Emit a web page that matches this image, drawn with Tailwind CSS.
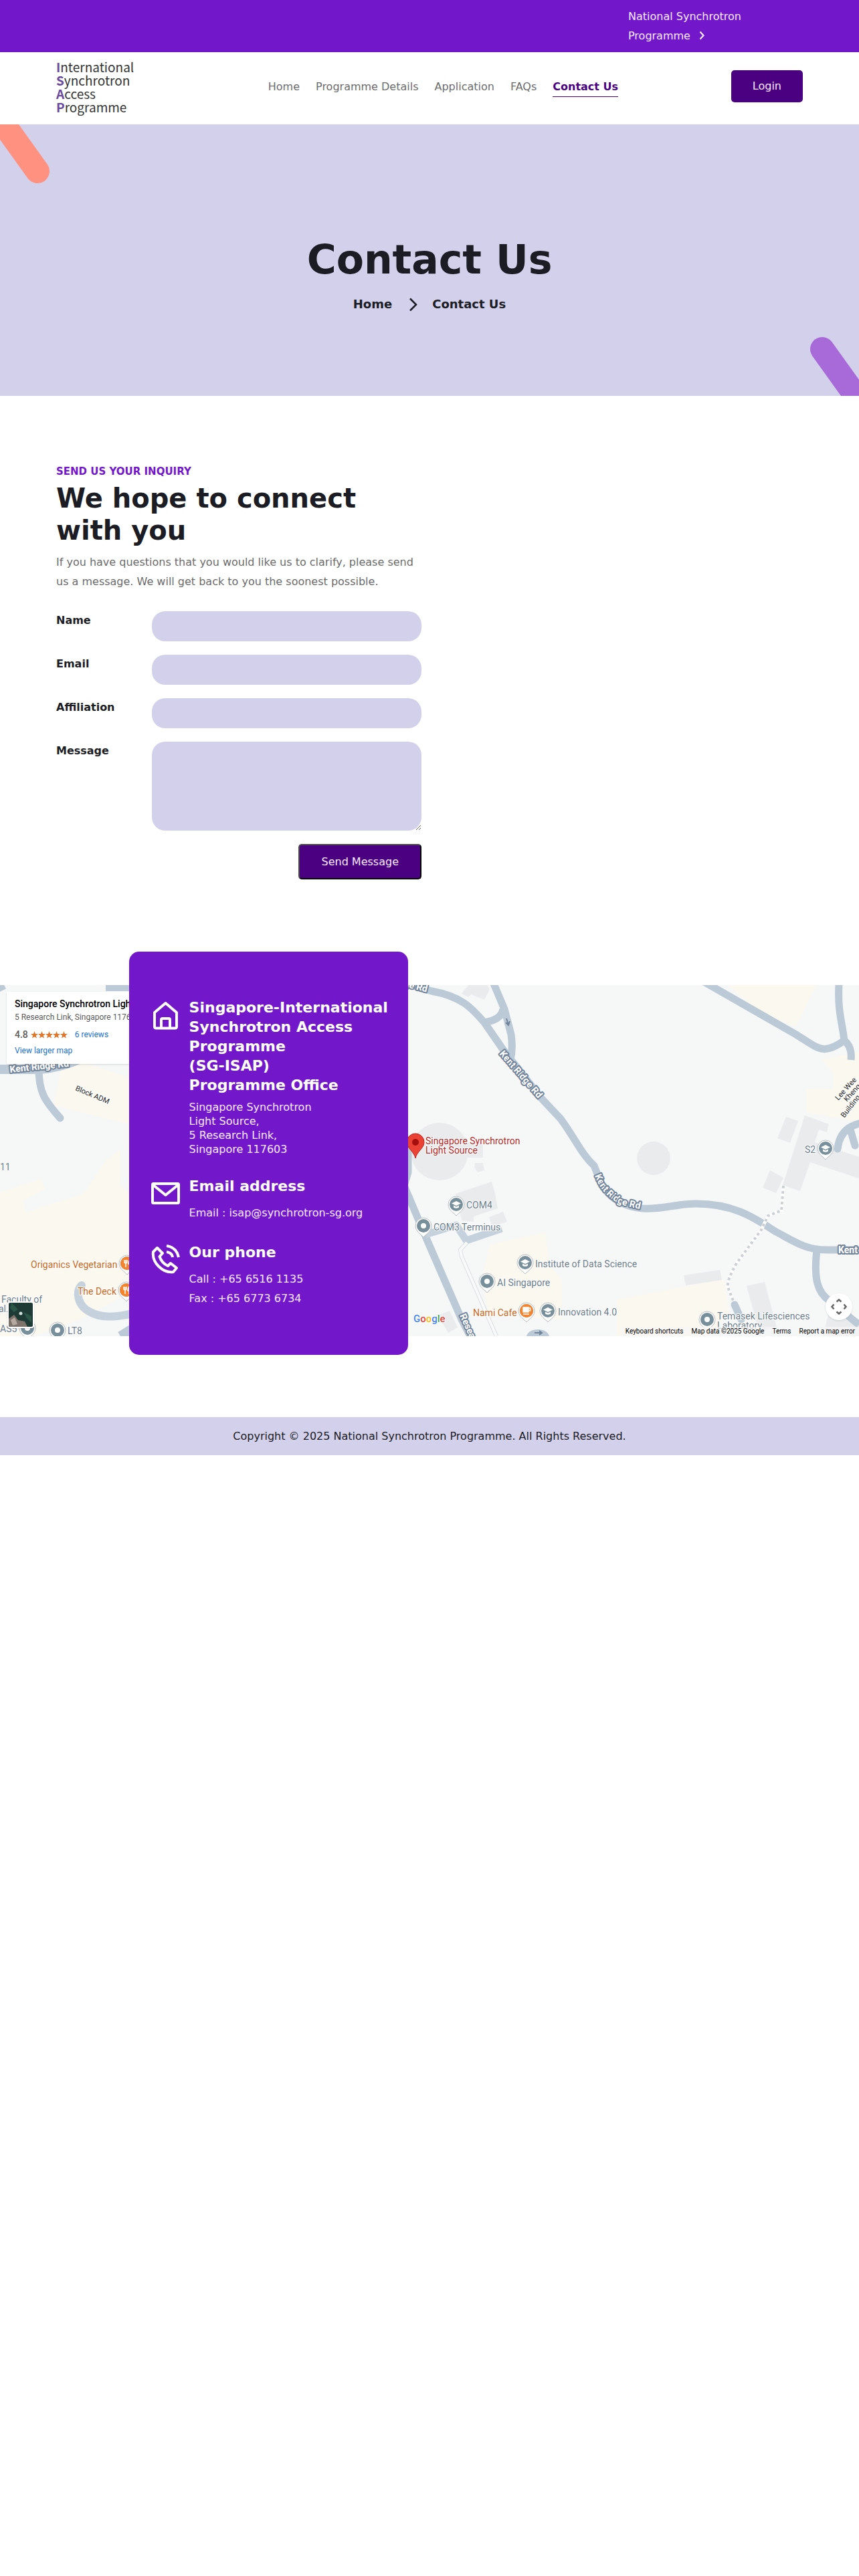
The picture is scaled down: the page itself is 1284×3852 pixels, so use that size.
<!DOCTYPE html>
<html lang="en">
<head>
<meta charset="utf-8">
<meta name="viewport" content="width=device-width, initial-scale=1">
<title>Contact Us - International Synchrotron Access Programme</title>
<script src="https://cdn.jsdelivr.net/npm/@tailwindcss/browser@4"></script>
</head>
<body class="bg-white font-['DejaVu_Sans',sans-serif] text-base leading-[29px] text-[#1b1c24]">

<!-- Top bar -->
<div class="bg-[#7317cb] py-2.5 text-[#f6e9ff]">
  <div class="mx-auto flex max-w-[1140px] justify-end px-3">
    <a href="#" class="w-[261px]">National Synchrotron<br>Programme
      <svg class="ml-1 inline-block size-4 align-[-2px]" viewBox="0 0 16 16" fill="none" stroke="currentColor" stroke-width="2.2"><path d="M5.500 2.500L10.500 8L5.500 13.500"/></svg></a>
  </div>
</div>

<!-- Header -->
<header class="bg-white">
  <div class="mx-auto grid h-[108px] max-w-[1140px] grid-cols-[auto_1fr_auto] items-center px-3">
    <a href="#" class="w-[116px] pb-1 font-['Noto_Sans_CJK_SC',sans-serif] text-[19px] leading-5 text-[#333]">
      <span class="block"><b class="text-[#6a4a9c]">I</b>nternational</span>
      <span class="block"><b class="text-[#6a4a9c]">S</b>ynchrotron</span>
      <span class="block"><b class="text-[#6a4a9c]">A</b>ccess</span>
      <span class="block"><b class="text-[#6a4a9c]">P</b>rogramme</span>
    </a>
    <nav class="mb-1 flex justify-center gap-6 pl-8 leading-7 text-[#6c6c6c]">
      <a href="#" class="border-b border-transparent">Home</a>
      <a href="#" class="border-b border-transparent">Programme Details</a>
      <a href="#" class="border-b border-transparent">Application</a>
      <a href="#" class="border-b border-transparent">FAQs</a>
      <a href="#" class="border-b border-[#4b0082] font-bold text-[#4b0082]">Contact Us</a>
    </nav>
    <button type="button" class="mb-1.5 h-12 rounded-[5px] bg-[#4b0082] px-8 leading-6 text-[#f6e9ff]">Login</button>
  </div>
</header>

<!-- Page banner -->
<section class="relative flex h-[406px] flex-col items-center overflow-hidden bg-[#d3d0eb] pt-[166px]">
  <svg class="absolute left-0 top-0" width="80" height="90" viewBox="0 0 80 90"><path d="M-30 -50L56 70" stroke="#ff9180" stroke-width="36" stroke-linecap="round"/></svg>
  <svg class="absolute bottom-0 right-0" width="80" height="90" viewBox="0 0 80 90"><path d="M25 20L111 140" stroke="#a86ad8" stroke-width="36" stroke-linecap="round"/></svg>
  <h1 class="text-[60px] font-bold leading-[72px]">Contact Us</h1>
  <div class="mt-4 flex items-center text-lg font-bold leading-[29px]">
    <a href="#">Home</a>
    <svg class="ml-6 mr-5 h-5 w-4" viewBox="0 0 16 20" fill="none" stroke="currentColor" stroke-width="2.500"><path d="M3 1.500L12 10.500L3 19.500"/></svg>
    <span>Contact Us</span>
  </div>
</section>

<!-- Inquiry form -->
<section class="mx-auto max-w-[1140px] px-3 pb-[108px] pt-[100px]">
  <div class="w-full max-w-[546px]">
    <p class="mb-0.5 text-[15px] font-bold uppercase leading-[27px] text-[#7317cb]">Send us your inquiry</p>
    <h2 class="mb-[9px] text-[40px] font-bold leading-[48px]">We hope to connect with you</h2>
    <p class="text-[#6c6c6c]">If you have questions that you would like us to clarify, please send us a message. We will get back to you the soonest possible.</p>
    <form class="mt-[30px] grid grid-cols-[143px_1fr] gap-y-5">
      <label for="name" class="font-bold leading-7">Name</label>
      <input id="name" type="text" class="h-[45px] rounded-[20px] bg-[#d3d0eb] px-5">
      <label for="email" class="font-bold leading-7">Email</label>
      <input id="email" type="email" class="h-[45px] rounded-[20px] bg-[#d3d0eb] px-5">
      <label for="affiliation" class="font-bold leading-7">Affiliation</label>
      <input id="affiliation" type="text" class="h-[45px] rounded-[20px] bg-[#d3d0eb] px-5">
      <label for="message" class="font-bold leading-7">Message</label>
      <textarea id="message" class="block h-[133px] w-full rounded-[20px] bg-[#d3d0eb] px-5 py-3"></textarea>
      <button type="submit" class="col-start-2 h-[53px] justify-self-end rounded-[5px] border-2 border-b-black border-l-[#4c4c4c] border-r-black border-t-[#4c4c4c] bg-[#4b0082] px-8 leading-6 text-[#f6e9ff]">Send Message</button>
    </form>
  </div>
</section>

<!-- Map with contact card -->
<section class="grid pb-[93px]">
  <div class="relative col-start-1 row-start-1 mt-[50px] h-[525px] overflow-hidden bg-[#f6f7f7] font-[Roboto,sans-serif]">
    <svg class="absolute left-0 top-0 h-full w-full" viewBox="0 0 1284 525" preserveAspectRatio="xMidYMid slice" fill="none">
      <defs>
        <g id="pin"><path d="M0 17C-3 13 -12 9 -12 0A12 12 0 1 1 12 0C12 9 3 13 0 17Z" fill="#fff" stroke="#b9bec3" stroke-width="1"/><circle r="10" fill="#78909c"/></g>
        <g id="dotpin"><use href="#pin"/><circle r="4" fill="#fff"/></g>
        <g id="cappin"><use href="#pin"/><path d="M-7 -1.500L0 -5L7 -1.500L0 2Z" fill="#fff"/><path d="M-4 1.500V4.500Q0 7 4 4.500V1.500L0 3.500Z" fill="#fff"/></g>
        <g id="foodpin"><use href="#pin"/><circle r="10" fill="#f5842c"/><path d="M-4 -5V-1Q-2 1 0 -1V-5M-2 -5V6M4 6V-5Q2 -3 2 1H4" stroke="#fff" stroke-width="1.500"/></g>
      </defs>

      <!-- Commercial blocks -->
      <g fill="#fbf8ef">
        <path d="M92 122L130 118L193 138V208L80 180Z"/>
        <path d="M0 310L62 290L68 305L35 322L38 340L125 312L158 262L180 245V300L193 310V460L120 500L50 525H0Z"/>
        <path d="M732 388L815 370L822 420L840 440V500L730 490L720 440Z"/>
        <path d="M922 470L1082 440L1090 490L1060 525H922Z"/>
        <path d="M1088 0H1220L1190 62L1140 45Z"/>
        <path d="M1228 112L1284 100V205L1205 190V155H1245V130Z"/>
      </g>

      <!-- Buildings -->
      <g fill="#e9ebed">
        <path d="M690 13L700 0H728L732 6L724 22L704 14L700 18Z"/>
        <circle cx="657" cy="249" r="43"/>
        <path d="M697 235H722V258H697ZM710 266H722L724 277L714 280L709 272Z"/>
        <path d="M681 312L735 294L740 312L744 334L708 346V354L690 352Z"/>
        <path d="M731 347L752 339L758 354L735 361Z"/>
        <path d="M655 494L672 487L684 512L670 520Z"/>
        <circle cx="977" cy="259" r="25"/>
        <path d="M1175 197L1193 203L1181 236L1162 229Z"/>
        <path d="M1203 195L1239 208L1236 220L1224 216L1218 235L1284 257V289L1211 265L1196 308L1170 299Z"/>
        <path d="M1151 277L1171 288L1160 311L1140 303Z"/>
        <path d="M1022 434L1076 426L1079 441L1025 449Z"/>
        <path d="M1116 450L1143 444L1161 512L1135 519Z"/>
        <path d="M1240 485L1284 500V525H1230Z"/>
      </g>

      <!-- Roads -->
      <g stroke="#bbcad6" stroke-width="11" stroke-linejoin="round">
        <path d="M0 0L4 8"/>
        <path d="M158 0H198" stroke-width="18"/>
        <path d="M0 126H60Q100 122 130 105" stroke-width="14"/>
        <path d="M58 124C58 160 66 172 90 199" stroke-linecap="round"/>
        <path d="M122 449C112 458 116 480 135 489Q160 504 220 485" stroke="#c5d2dd" stroke-width="12" stroke-linecap="round"/>
        <path d="M180 525L220 500" stroke-width="14"/>
        <path d="M600 -4L645 9C690 17 705 34 724 56L753 98L808 168L838 200C860 230 870 254 888 270L900 300Q920 330 960 334C990 336 1010 327 1040 327C1100 327 1130 350 1160 369C1190 385 1205 396 1235 396H1284"/>
        <path d="M738 -2L754 36L764 74Q767 95 763 112M752 36C750 48 740 54 722 56"/>
        <path d="M1052 -5L1190 74C1225 96 1230 105 1262 83C1258 50 1252 40 1254 -2M1262 83Q1274 92 1272 112"/>
        <path d="M1284 207Q1255 215 1252 245M1271 216L1278 240" stroke-linecap="round"/>
        <path d="M1221 396C1216 440 1222 460 1240 472L1284 508"/>
        <path d="M600 220L610 250V280L604 300L640 385L690 500L708 535"/>
        <path d="M636 373L682 359L697 382L750 364" stroke="#c5d2dd"/>
        <path d="M1098 478L1108 500" stroke-linecap="round"/>
      </g>
      <path d="M698 385L688 396L690 406L742 525" stroke="#dcdfe2" stroke-width="6"/>
      <path d="M698 385L688 396L690 406L742 525" stroke="#f9fafa" stroke-width="4"/>
      <path d="M1171 300L1168 337L1148 345L1138 366L1101 416Q1086 442 1088 452L1096 472" stroke="#fff" stroke-width="5"/>
      <path d="M1171 300L1168 337L1148 345L1138 366L1101 416Q1086 442 1088 452L1096 472" stroke="#ced1d4" stroke-width="4" stroke-dasharray="4 4"/>
      <path d="M757 50L760 59M756 56L760 60L762 54" stroke="#71859a" stroke-width="2"/>
      <ellipse cx="804" cy="526" rx="17" ry="11" fill="#bbcad6"/>
      <path d="M799 520H809M806 517L810 520L806 523" stroke="#71859a" stroke-width="2"/>

      <!-- Road names -->
      <g fill="#fff" stroke="#72849a" stroke-width="4" stroke-linejoin="round" font-size="14" font-weight="700" style="paint-order:stroke">
        <path id="road-a" d="M746 103L820 188" stroke="none" fill="none"/>
        <path id="road-b" d="M889 285Q900 315 930 329L975 339" stroke="none" fill="none"/>
        <text><textPath href="#road-a">Kent Ridge Rd</textPath></text>
        <text><textPath href="#road-b">Kent Ridge Rd</textPath></text>
        <text transform="translate(15 131) rotate(-6)">Kent Ridge Rd</text>
        <text x="1253" y="401">Kent Ridge</text>
        <text transform="translate(583 -3) rotate(14)">Ridge Rd</text>
        <text transform="translate(687 494) rotate(66)">Research Link</text>
      </g>

      <!-- Place names -->
      <g font-size="14" fill="#6b7d8a" stroke="#fff" stroke-width="2" style="paint-order:stroke">
        <text x="0" y="277">11</text>
        <text x="2" y="475">Faculty of</text>
        <text x="-2" y="489">al.</text>
        <text x="0" y="519">AS5</text>
        <text x="101" y="522">LT8</text>
        <text x="697" y="334">COM4</text>
        <text x="648" y="367">COM3 Terminus</text>
        <text x="800" y="422">Institute of Data Science</text>
        <text x="743" y="450">AI Singapore</text>
        <text x="834" y="494">Innovation 4.0</text>
        <text x="1203" y="251">S2</text>
        <text x="1072" y="500">Temasek Lifesciences</text>
        <text x="1072" y="514">Laboratory</text>
        <g fill="#c5681b">
          <text x="46" y="423">Origanics Vegetarian</text>
          <text x="116" y="463">The Deck</text>
          <text x="707" y="495">Nami Cafe</text>
        </g>
        <g fill="#b3261e">
          <text x="636" y="238">Singapore Synchrotron</text>
          <text x="636" y="252">Light Source</text>
        </g>
        <g fill="#222" font-size="11">
          <text transform="translate(112 157) rotate(23)">Block ADM</text>
          <text transform="translate(1253 173) rotate(-48)">Lee Wee</text>
          <text transform="translate(1266 175) rotate(-48)">Kheng</text>
          <text transform="translate(1262 199) rotate(-52)">Building</text>
        </g>
      </g>

      <!-- Markers -->
      <use href="#cappin" x="682" y="328"/>
      <use href="#dotpin" x="633" y="360"/>
      <use href="#cappin" x="785" y="415"/>
      <use href="#dotpin" x="728" y="443"/>
      <use href="#cappin" x="819" y="487"/>
      <use href="#cappin" x="1234" y="244"/>
      <use href="#dotpin" x="1057" y="500"/>
      <use href="#dotpin" x="86" y="516"/>
      <use href="#dotpin" x="41" y="513"/>
      <use href="#foodpin" x="190" y="416"/>
      <use href="#foodpin" x="189" y="456"/>
      <g transform="translate(787 487)"><use href="#pin"/><circle r="10" fill="#f5842c"/><path d="M-5 -5H3V2H-5ZM-5 5H4" fill="#fff" stroke="#fff" stroke-width="1.500"/><path d="M3 -4H5.500V0H3" stroke="#fff" stroke-width="1.500"/></g>
      <path d="M621 259C619 249 608 244 608 235A13 13 0 0 1 634 235C634 244 623 249 621 259Z" fill="#ea4335" stroke="#c5221f"/>
      <circle cx="621" cy="235" r="5" fill="#a50e0e"/>
      <text x="618" y="504" font-size="15" font-weight="500" stroke="#fff" stroke-width="2" style="paint-order:stroke"><tspan fill="#4285f4">G</tspan><tspan fill="#ea4335">o</tspan><tspan fill="#fbbc04">o</tspan><tspan fill="#4285f4">g</tspan><tspan fill="#34a853">l</tspan><tspan fill="#ea4335">e</tspan></text>
    </svg>

    <!-- Place card -->
    <div class="absolute left-2.5 top-2.5 h-[108px] w-[260px] bg-white px-3 pt-2 shadow-sm">
      <p class="whitespace-nowrap text-sm font-medium leading-5 text-black">Singapore Synchrotron Light Source</p>
      <p class="text-xs leading-5 text-[#5b5b5b]">5 Research Link, Singapore 117603</p>
      <p class="mt-1.5 flex items-center text-xs leading-5 text-[#1a73c8]">
        <span class="mr-1 text-sm font-medium text-[#5b5b5b]">4.8</span>
        <svg class="mr-[11px]" width="55" height="11" viewBox="0 0 55 11" fill="#e0762a"><defs><path id="star" d="M5.500 0L7 4H11L7.800 6.500L9 10.600L5.500 8.200L2 10.600L3.200 6.500L0 4H4Z"/></defs><use href="#star"/><use href="#star" x="11"/><use href="#star" x="22"/><use href="#star" x="33"/><use href="#star" x="44"/></svg>
        <a href="#">6 reviews</a>
      </p>
      <a href="#" class="mt-1 block text-xs leading-5 text-[#1a73c8]">View larger map</a>
    </div>

    <!-- Satellite toggle -->
    <button type="button" aria-label="Show satellite imagery" class="absolute bottom-3 left-[11px] size-10 overflow-hidden rounded border-2 border-white bg-[#1d3a35] shadow">
      <svg class="size-full" viewBox="0 0 36 36"><path d="M0 24L8 18L14 26L24 28L28 36H0Z" fill="#7d736b"/><path d="M4 0L14 10L8 14L2 8ZM22 14L34 20V30L26 22Z" fill="#2c5648"/><path d="M3 26L9 22L13 32L6 34Z" fill="#b5a9a0"/><circle cx="18" cy="16" r="2.500" fill="#cfe0dc"/></svg>
    </button>

    <!-- Camera controls -->
    <button type="button" aria-label="Map camera controls" class="absolute bottom-6 right-2.5 flex size-10 items-center justify-center rounded-full bg-white shadow">
      <svg width="24" height="24" viewBox="0 0 24 24" fill="none" stroke="#666" stroke-width="2.500"><path d="M8.500 4.500L12 1.500L15.500 4.500M8.500 19.500L12 22.500L15.500 19.500M4.500 8.500L1.500 12L4.500 15.500M19.500 8.500L22.500 12L19.500 15.500"/></svg>
    </button>

    <div class="absolute bottom-0 right-0 flex gap-3 bg-[#f6f7f7]/70 px-1.5 text-[10px] leading-[14px] text-black">
      <button type="button">Keyboard shortcuts</button>
      <span>Map data ©2025 Google</span>
      <a href="#">Terms</a>
      <a href="#">Report a map error</a>
    </div>
  </div>

  <div class="relative col-start-1 row-start-1 ml-[15%] flex w-[417px] flex-col gap-[30px] rounded-[15px] bg-[#7317cb] pb-[70px] pl-[33px] pr-5 pt-[69px] text-[#f6e9ff]">
    <div class="flex gap-3.5">
      <svg class="h-[50px] w-[43px] shrink-0" viewBox="0 0 43 50" fill="none" stroke="#fff" stroke-width="4" stroke-linejoin="round"><path d="M5 22L21.500 8L38 22V43Q38 45.500 35.500 45.500H7.500Q5 45.500 5 43Z"/><path d="M15 45V33Q15 31 17 31H26Q28 31 28 33V45"/></svg>
      <div>
        <h3 class="mb-2 text-[22px] font-bold leading-[29px] text-white">Singapore-International Synchrotron Access Programme<br>(SG-ISAP)<br>Programme Office</h3>
        <address class="not-italic leading-[21px]">Singapore Synchrotron<br>Light Source,<br>5 Research Link,<br>Singapore 117603</address>
      </div>
    </div>
    <div class="flex gap-3.5">
      <svg class="h-[50px] w-[43px] shrink-0" viewBox="0 0 43 50" fill="none" stroke="#fff" stroke-width="4" stroke-linejoin="round"><rect x="2" y="11" width="39" height="29" rx="1.500"/><path d="M3 13L21.500 28L40 13"/></svg>
      <div>
        <h3 class="mb-[11px] text-[22px] font-bold leading-[29px] text-white">Email address</h3>
        <p>Email : isap@synchrotron-sg.org</p>
      </div>
    </div>
    <div class="flex gap-3.5">
      <svg class="h-[50px] w-[43px] shrink-0" viewBox="0 0 43 50" fill="none" stroke="#fff" stroke-width="4" stroke-linejoin="round"><path d="M9 8L3 14C1 30 17 46 33 44L38 38L29 31L25 35Q16 31 12.500 21L17 16Z"/><path d="M23 5Q38 7 41 22M23 14Q31 15 32 22"/></svg>
      <div>
        <h3 class="mb-[11px] text-[22px] font-bold leading-[29px] text-white">Our phone</h3>
        <p>Call : +65 6516 1135</p>
        <p>Fax : +65 6773 6734</p>
      </div>
    </div>
  </div>
</section>

<footer class="bg-[#d3d0eb] px-3 py-3.5 text-center">Copyright © 2025 National Synchrotron Programme. All Rights Reserved.</footer>

</body>
</html>
